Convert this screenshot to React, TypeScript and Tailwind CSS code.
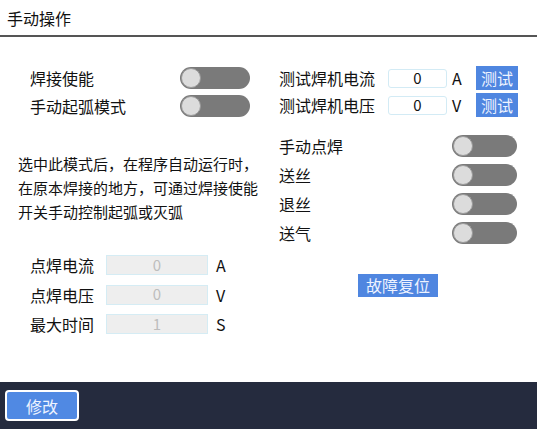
import React from "react";

const font = { fontFamily: '"Noto Sans CJK SC", "Noto Sans", sans-serif' };

function Switch({ wide = false }: { wide?: boolean }) {
  return (
    <div
      className={
        "flex h-[22px] shrink-0 items-center rounded-full bg-[#7a7a7a] pl-[1px] " +
        (wide ? "w-[70px]" : "w-[65px]")
      }
    >
      <div className="size-[20px] rounded-full border border-[#9a9a9a] bg-[#dcdcdc]" />
    </div>
  );
}

function TestRow({ label, unit }: { label: string; unit: string }) {
  return (
    <div className="flex h-[24px] items-center">
      <span className="w-[109px] shrink-0 text-[16px] text-[#111]">{label}</span>
      <div className="flex h-[19px] w-[59px] shrink-0 items-center justify-center rounded-[3px] border border-[#d3ebf5] bg-white text-[15px] text-[#111]">
        0
      </div>
      <span className="ml-[5px] w-[24px] shrink-0 text-[16px] text-[#111]">{unit}</span>
      <button className="h-[24px] w-[42px] shrink-0 bg-[#4f86e0] text-[16px] text-[#eef3ff]">
        测试
      </button>
    </div>
  );
}

function ToggleRow({ label }: { label: string }) {
  return (
    <div className="flex h-[22px] items-center justify-between">
      <span className="text-[16px] text-[#111]">{label}</span>
      <Switch />
    </div>
  );
}

function Field({ label, value, unit }: { label: string; value: string; unit: string }) {
  return (
    <div className="flex h-[20px] items-center">
      <span className="w-[76px] text-[16px] text-[#111]">{label}</span>
      <div className="flex h-[20px] w-[102px] items-center justify-center border border-[#d5ecf4] bg-[#eeeeee] text-[15px] text-[#bdbdbd]">
        {value}
      </div>
      <span className="ml-[8px] text-[16px] text-[#111]">{unit}</span>
    </div>
  );
}

export default function App() {
  return (
    <div className="flex h-[429px] w-[537px] flex-col bg-white" style={font}>
      <div className="flex h-[35px] items-center px-[7px] text-[16px] text-[#111]">
        手动操作
      </div>
      <div className="h-[2px] bg-[#555]" />

      <div className="flex flex-1">
        <div className="w-[270px] shrink-0">
          <div className="mt-[30px] flex flex-col gap-[6px] pl-[30px]">
            <div className="flex h-[22px] items-center">
              <span className="w-[150px] text-[16px] text-[#111]">焊接使能</span>
              <Switch wide />
            </div>
            <div className="flex h-[22px] items-center">
              <span className="w-[150px] text-[16px] text-[#111]">手动起弧模式</span>
              <Switch wide />
            </div>
          </div>
          <p className="mt-[35px] pl-[18px] text-[15px] leading-[24px] text-[#111]">
            选中此模式后，在程序自动运行时，
            <br />
            在原本焊接的地方，可通过焊接使能
            <br />
            开关手动控制起弧或灭弧
          </p>
          <div className="mt-[31px] flex flex-col gap-[9.5px] pl-[30px]">
            <Field label="点焊电流" value="0" unit="A" />
            <Field label="点焊电压" value="0" unit="V" />
            <Field label="最大时间" value="1" unit="S" />
          </div>
        </div>

        <div className="flex-1 pl-[9px]">
          <div className="mt-[29px] flex flex-col gap-[3px]">
            <TestRow label="测试焊机电流" unit="A" />
            <TestRow label="测试焊机电压" unit="V" />
          </div>
          <div className="mt-[18px] flex w-[238px] flex-col gap-[7px]">
            <ToggleRow label="手动点焊" />
            <ToggleRow label="送丝" />
            <ToggleRow label="退丝" />
            <ToggleRow label="送气" />
          </div>
          <button className="ml-[79px] mt-[30px] h-[23px] w-[80px] bg-[#4f86e0] text-[16px] leading-[23px] text-[#eef3ff]">
            故障复位
          </button>
        </div>
      </div>

      <div className="flex h-[47px] items-center bg-[#252b3e] px-[5px]">
        <button className="h-[31px] w-[74px] rounded-[4px] border-2 border-white bg-[#5089e3] text-[16px] text-[#eef3ff]">
          修改
        </button>
      </div>
    </div>
  );
}
